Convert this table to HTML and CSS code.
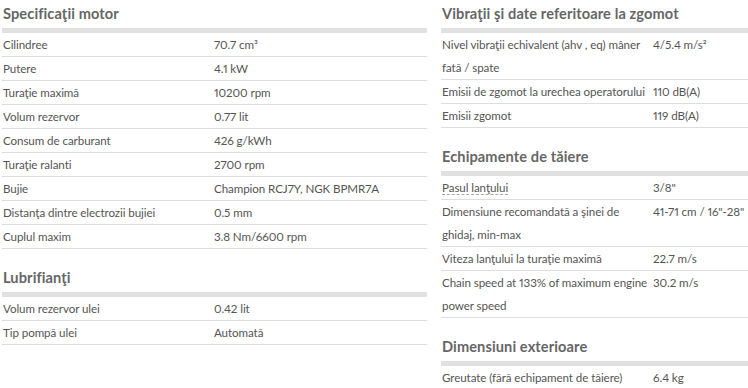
FILE: index.html
```html
<!DOCTYPE html>
<html lang="ro">
<head>
<meta charset="utf-8">
<title>Specificaţii</title>
<link rel="stylesheet" href="styles.css">
</head>
<body>
<div class="page">
  <div class="col">
    <section class="spec">
      <h3 class="spec-title">Specificaţii motor</h3>
      <div class="spec-rows">
        <div class="row"><div class="label">Cilindree</div><div class="value">70.7 cm³</div></div>
        <div class="row"><div class="label">Putere</div><div class="value">4.1 kW</div></div>
        <div class="row"><div class="label">Turaţie maximă</div><div class="value">10200 rpm</div></div>
        <div class="row"><div class="label">Volum rezervor</div><div class="value">0.77 lit</div></div>
        <div class="row"><div class="label">Consum de carburant</div><div class="value">426 g/kWh</div></div>
        <div class="row"><div class="label">Turaţie ralanti</div><div class="value">2700 rpm</div></div>
        <div class="row"><div class="label">Bujie</div><div class="value">Champion RCJ7Y, NGK BPMR7A</div></div>
        <div class="row"><div class="label">Distanţa dintre electrozii bujiei</div><div class="value">0.5 mm</div></div>
        <div class="row"><div class="label">Cuplul maxim</div><div class="value">3.8 Nm/6600 rpm</div></div>
      </div>
    </section>
    <section class="spec">
      <h3 class="spec-title">Lubrifianţi</h3>
      <div class="spec-rows">
        <div class="row"><div class="label">Volum rezervor ulei</div><div class="value">0.42 lit</div></div>
        <div class="row"><div class="label">Tip pompă ulei</div><div class="value">Automată</div></div>
      </div>
    </section>
  </div>
  <div class="col">
    <section class="spec">
      <h3 class="spec-title">Vibraţii şi date referitoare la zgomot</h3>
      <div class="spec-rows">
        <div class="row"><div class="label">Nivel vibraţii echivalent (ahv , eq) mâner<br>fată / spate</div><div class="value">4/5.4 m/s²</div></div>
        <div class="row"><div class="label">Emisii de zgomot la urechea operatorului</div><div class="value">110 dB(A)</div></div>
        <div class="row"><div class="label">Emisii zgomot</div><div class="value">119 dB(A)</div></div>
      </div>
    </section>
    <section class="spec">
      <h3 class="spec-title">Echipamente de tăiere</h3>
      <div class="spec-rows">
        <div class="row"><div class="label"><span class="hint">Pasul lanţului</span></div><div class="value">3/8"</div></div>
        <div class="row"><div class="label">Dimensiune recomandată a şinei de<br>ghidaj, min-max</div><div class="value">41-71 cm / 16"-28"</div></div>
        <div class="row"><div class="label">Viteza lanţului la turaţie maximă</div><div class="value">22.7 m/s</div></div>
        <div class="row"><div class="label">Chain speed at 133% of maximum engine<br>power speed</div><div class="value">30.2 m/s</div></div>
      </div>
    </section>
    <section class="spec">
      <h3 class="spec-title">Dimensiuni exterioare</h3>
      <div class="spec-rows">
        <div class="row"><div class="label">Greutate (fără echipament de tăiere)</div><div class="value">6.4 kg</div></div>
      </div>
    </section>
  </div>
</div>
</body>
</html>
```

FILE: styles.css
```css
html, body {
  margin: 0;
  padding: 0;
  background: #ffffff;
  overflow: hidden;
}

body {
  font-family: Lato, "Open Sans", sans-serif;
  font-size: 11.6px;
  letter-spacing: -0.08px;
  font-variant-numeric: proportional-nums;
  color: #555555;
}

.page {
  display: grid;
  grid-template-columns: 425px 425px;
  column-gap: 14px;
  padding-left: 2px;
  width: 864px;
  align-items: start;
}

.col {
  display: flex;
  flex-direction: column;
  row-gap: 15px;
}

.spec-title {
  margin: 0;
  padding: 4px 0 4px 1px;
  font-size: 14.6px;
  line-height: 20px;
  font-weight: bold;
  letter-spacing: 0.1px;
  color: #666666;
  border-bottom: 5px solid #e1e1e1;
}

.row {
  display: grid;
  grid-template-columns: 212px 1fr;
  line-height: 23px;
  border-bottom: 1px solid #dddddd;
}

.label {
  padding-left: 1px;
  white-space: nowrap;
}

.value {
  white-space: nowrap;
}

.hint {
  border-bottom: 1px dashed #aaaaaa;
}
```
